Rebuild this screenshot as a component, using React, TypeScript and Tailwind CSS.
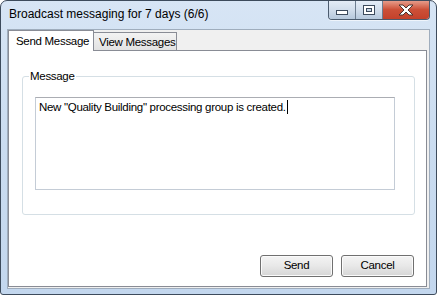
import React from "react";

function TitleButtons() {
  return (
    <div className="flex h-[20px] rounded-b-[4px] border border-t-0 border-[#4b5b6e] overflow-hidden shadow-[0_1px_0_rgba(255,255,255,0.6)]">
      <div className="w-[27px] h-full flex items-end justify-center pb-[4px] bg-gradient-to-b from-[#e6eef8] via-[#d2deec] to-[#b6c8dc] border-r border-[#6d7d90]">
        <svg width="12" height="5" viewBox="0 0 12 5">
          <rect x="0.5" y="0.5" width="11" height="4" fill="#fff" stroke="#3c4a5c" />
        </svg>
      </div>
      <div className="w-[27px] h-full flex items-center justify-center bg-gradient-to-b from-[#e6eef8] via-[#d2deec] to-[#b6c8dc] border-r border-[#6d7d90]">
        <svg width="12" height="10" viewBox="0 0 12 10">
          <rect x="0.5" y="0.5" width="11" height="9" fill="#fff" stroke="#3c4a5c" />
          <rect x="3.5" y="3.5" width="5" height="3" fill="#c8d6e6" stroke="#3c4a5c" />
        </svg>
      </div>
      <div className="w-[46px] h-full flex items-center justify-center bg-gradient-to-b from-[#e8a393] via-[#cc5038] to-[#c4412b]">
        <svg width="16" height="12" viewBox="0 0 16 12">
          <path
            d="M1 1 H5 L8 4 L11 1 H15 L10 6 L15 11 H11 L8 8 L5 11 H1 L6 6 Z"
            fill="#fff"
            stroke="#4a3430"
            strokeWidth="1"
            strokeLinejoin="round"
          />
        </svg>
      </div>
    </div>
  );
}

function WinButton({ label }: { label: string }) {
  return (
    <div className="w-[73px] h-[22px] rounded-[3px] border border-[#707070] bg-gradient-to-b from-[#f4f4f4] via-[#e8e8e8] to-[#d6d6d6] shadow-[inset_0_0_0_1px_#fbfbfb] flex items-center justify-center text-black">
      {label}
    </div>
  );
}

export default function App() {
  return (
    <div className="w-[437px] h-[295px] font-['Liberation_Sans',Arial,sans-serif] text-[11.5px] tracking-[-0.3px] text-black bg-white">
      <div className="w-[437px] h-[295px] flex flex-col rounded-t-[7px] rounded-b-[3px] border border-[#3d4b5c] bg-gradient-to-b from-[#d7e5f5] via-[#cadcf0] to-[#c3d7ee] overflow-hidden">
        {/* Title bar */}
        <div className="h-[28px] flex items-start shrink-0">
          <div className="pl-[8px] pt-[6px] leading-[15px] text-[12px] tracking-normal text-black whitespace-nowrap">
            Broadcast messaging for 7 days (6/6)
          </div>
          <div className="ml-auto mr-[6px] -mt-px">
            <TitleButtons />
          </div>
        </div>
        {/* Client area */}
        <div className="flex-1 mx-[6px] mb-[5px] border border-[#9fadbd] bg-[#f0f0f0] flex flex-col pr-[2px] pb-px">
          {/* Tabs */}
          <div className="flex items-end h-[20px] shrink-0 relative z-10">
            <div className="w-[86px] h-[21px] -mb-px border border-b-0 border-[#898c95] bg-white flex items-start pl-[7px] pt-[3px] leading-[14px] whitespace-nowrap">
              Send Message
            </div>
            <div className="w-[83px] h-[18px] border border-l-0 border-b-0 border-[#898c95] bg-gradient-to-b from-[#f3f3f3] to-[#e2e2e2] flex items-start pl-[5px] pt-[2px] leading-[14px] whitespace-nowrap">
              View Messages
            </div>
          </div>
          {/* Panel */}
          <div className="flex-1 border border-[#898c95] bg-white flex flex-col">
            <div className="relative mt-[25px] ml-[13px] w-[393px] h-[139px] border border-[#d5dfe5] rounded-[3px]">
              <div className="absolute left-[6px] -top-[8px] px-[1px] bg-white leading-[14px]">Message</div>
              <div className="mt-[20px] ml-[12px] w-[360px] h-[93px] border border-[#c4ccd6] border-t-[#abadb3] bg-white pl-[3px] pt-[2px] leading-[14px] flex items-start whitespace-nowrap">
                <span>New "Quality Building" processing group is created.</span>
                <span className="inline-block w-px h-[14px] bg-black ml-px" />
              </div>
            </div>
            <div className="flex justify-end gap-[8px] mt-[40px] mr-[12px]">
              <WinButton label="Send" />
              <WinButton label="Cancel" />
            </div>
          </div>
        </div>
      </div>
    </div>
  );
}
